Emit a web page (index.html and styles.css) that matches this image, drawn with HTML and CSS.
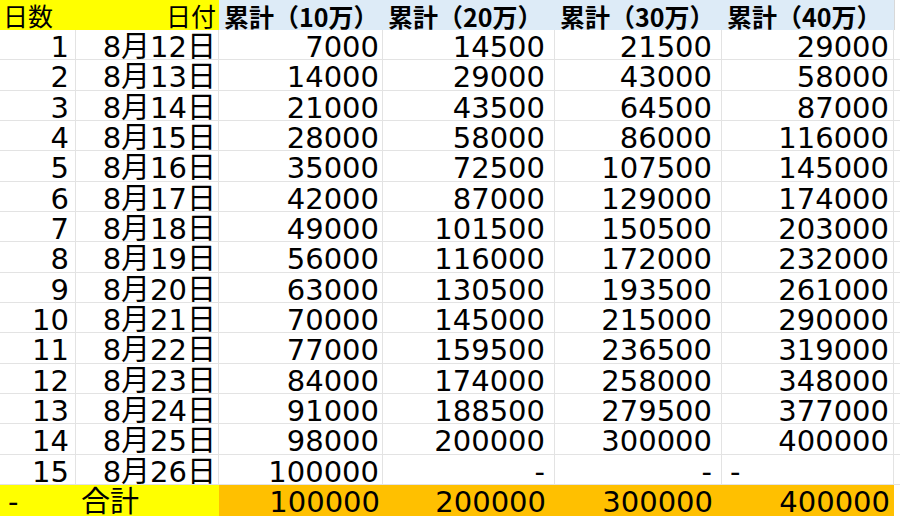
FILE: index.html
```html
<!DOCTYPE html>
<html lang="ja">
<head>
<meta charset="utf-8">
<link rel="stylesheet" href="styles.css">
</head>
<body>
<div class="sheet">
  <div class="c hy ha">日数</div><div class="c hy hb">日付</div><div class="c hb2">累計（10万）</div><div class="c hb2">累計（20万）</div><div class="c hb2">累計（30万）</div><div class="c hb2">累計（40万）</div><div class="c hx"></div>

  <div class="c n a">1</div><div class="c n b">8月12日</div><div class="c n cc">7000</div><div class="c n dd">14500</div><div class="c n ee">21500</div><div class="c n ff">29000</div><div class="c x"></div>
  <div class="c n a">2</div><div class="c n b">8月13日</div><div class="c n cc">14000</div><div class="c n dd">29000</div><div class="c n ee">43000</div><div class="c n ff">58000</div><div class="c x"></div>
  <div class="c n a">3</div><div class="c n b">8月14日</div><div class="c n cc">21000</div><div class="c n dd">43500</div><div class="c n ee">64500</div><div class="c n ff">87000</div><div class="c x"></div>
  <div class="c n a">4</div><div class="c n b">8月15日</div><div class="c n cc">28000</div><div class="c n dd">58000</div><div class="c n ee">86000</div><div class="c n ff">116000</div><div class="c x"></div>
  <div class="c n a">5</div><div class="c n b">8月16日</div><div class="c n cc">35000</div><div class="c n dd">72500</div><div class="c n ee">107500</div><div class="c n ff">145000</div><div class="c x"></div>
  <div class="c n a">6</div><div class="c n b">8月17日</div><div class="c n cc">42000</div><div class="c n dd">87000</div><div class="c n ee">129000</div><div class="c n ff">174000</div><div class="c x"></div>
  <div class="c n a">7</div><div class="c n b">8月18日</div><div class="c n cc">49000</div><div class="c n dd">101500</div><div class="c n ee">150500</div><div class="c n ff">203000</div><div class="c x"></div>
  <div class="c n a">8</div><div class="c n b">8月19日</div><div class="c n cc">56000</div><div class="c n dd">116000</div><div class="c n ee">172000</div><div class="c n ff">232000</div><div class="c x"></div>
  <div class="c n a">9</div><div class="c n b">8月20日</div><div class="c n cc">63000</div><div class="c n dd">130500</div><div class="c n ee">193500</div><div class="c n ff">261000</div><div class="c x"></div>
  <div class="c n a">10</div><div class="c n b">8月21日</div><div class="c n cc">70000</div><div class="c n dd">145000</div><div class="c n ee">215000</div><div class="c n ff">290000</div><div class="c x"></div>
  <div class="c n a">11</div><div class="c n b">8月22日</div><div class="c n cc">77000</div><div class="c n dd">159500</div><div class="c n ee">236500</div><div class="c n ff">319000</div><div class="c x"></div>
  <div class="c n a">12</div><div class="c n b">8月23日</div><div class="c n cc">84000</div><div class="c n dd">174000</div><div class="c n ee">258000</div><div class="c n ff">348000</div><div class="c x"></div>
  <div class="c n a">13</div><div class="c n b">8月24日</div><div class="c n cc">91000</div><div class="c n dd">188500</div><div class="c n ee">279500</div><div class="c n ff">377000</div><div class="c x"></div>
  <div class="c n a">14</div><div class="c n b">8月25日</div><div class="c n cc">98000</div><div class="c n dd">200000</div><div class="c n ee">300000</div><div class="c n ff">400000</div><div class="c x"></div>
  <div class="c n a">15</div><div class="c n b">8月26日</div><div class="c n cc">100000</div><div class="c n dd">-</div><div class="c n ee">-</div><div class="c n ff left">-</div><div class="c x"></div>

  <div class="c n ty ta">-</div><div class="c n ty tb">合計</div><div class="c n to cc">100000</div><div class="c n to dd">200000</div><div class="c n to ee">300000</div><div class="c n to ff">400000</div><div class="c x tx"></div>
</div>
</body>
</html>
```
FILE: styles.css
```css
html, body {
  margin: 0;
  padding: 0;
  background: #ffffff;
}
.sheet {
  width: 900px;
  height: 516px;
  display: grid;
  grid-template-columns: 76px 143px 164px 172px 167px 172px 6px;
  grid-template-rows: 30px repeat(15, 30.333px) 31px;
  overflow: hidden;
  color: #000;
}
.c {
  box-sizing: border-box;
  white-space: nowrap;
  overflow: visible;
}
.hy { background: #ffff00; }
.ha, .hb {
  font-family: "Noto Sans CJK JP", sans-serif;
  font-size: 25px;
  line-height: 30px;
}
.ha { padding-left: 3px; }
.hb { text-align: right; padding-right: 3px; }
.hb2 {
  background: #ddebf7;
  font-family: "Noto Sans CJK JP", sans-serif;
  font-weight: bold;
  font-size: 25px;
  line-height: 30px;
  padding-top: 1px;
  padding-left: 5px;
}
.hx { background: #ffffff; border-left: 1px solid #d8d8d8; }
.n {
  font-family: "DejaVu Sans", "Noto Sans CJK JP", sans-serif;
  font-size: 29px;
  line-height: 30px;
  padding-top: 2px;
  text-align: right;
  border-right: 1px solid #e3e3e3;
  border-bottom: 1px solid #e3e3e3;
}
.a { padding-right: 6px; }
.b { padding-right: 2px; }
.cc { padding-right: 3px; }
.dd { padding-right: 9px; }
.ee { padding-right: 9px; }
.ff { padding-right: 4px; }
.ff.left { text-align: left; padding-left: 8px; }
.x { border-bottom: 1px solid #e3e3e3; }
.ty { background: #ffff00; border: none; }
.ta { text-align: left; padding-left: 8px; }
.tb { text-align: left; padding-left: 5px; }
.to { background: #ffc000; border: none; }
.tx { border: none; }
```
